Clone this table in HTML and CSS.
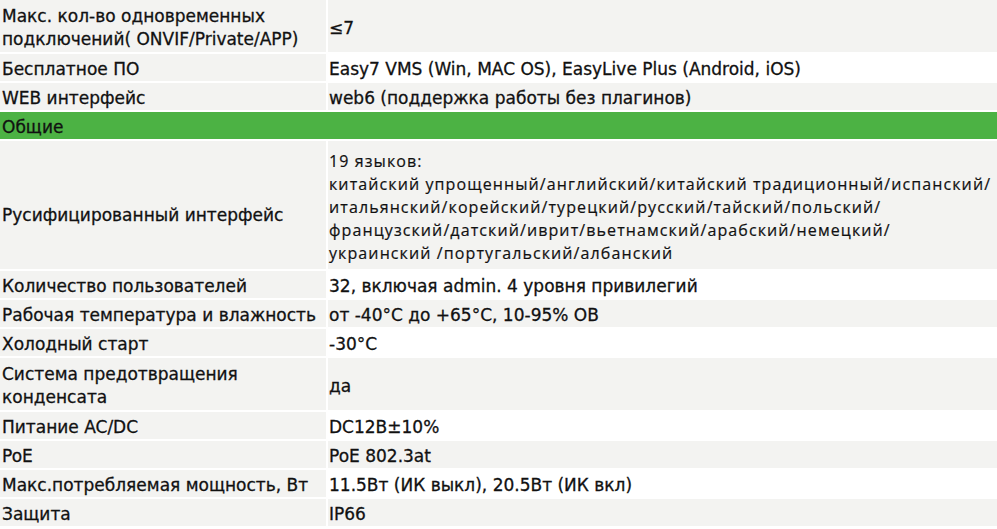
FILE: index.html
```html
<!DOCTYPE html>
<html lang="ru">
<head>
<meta charset="utf-8">
<title>Характеристики</title>
<link rel="stylesheet" href="styles.css">
</head>
<body>
<div class="specs">
  <div class="cell label tall">Макс. кол-во одновременных подключений( ONVIF/Private/APP)</div>
  <div class="cell value tall shade">≤7</div>

  <div class="cell label">Бесплатное ПО</div>
  <div class="cell value">Easy7 VMS (Win, MAC OS), EasyLive Plus (Android, iOS)</div>

  <div class="cell label">WEB интерфейс</div>
  <div class="cell value shade">web6 (поддержка работы без плагинов)</div>

  <div class="cell section">Общие</div>

  <div class="cell label lang-label">Русифицированный интерфейс</div>
  <div class="cell value shade langs">19 языков:<br>китайский упрощенный/английский/китайский традиционный/испанский/<br>итальянский/корейский/турецкий/русский/тайский/польский/<br>французский/датский/иврит/вьетнамский/арабский/немецкий/<br>украинский /португальский/албанский</div>

  <div class="cell label">Количество пользователей</div>
  <div class="cell value">32, включая admin. 4 уровня привилегий</div>

  <div class="cell label">Рабочая температура и влажность</div>
  <div class="cell value shade">от -40°C до +65°C, 10-95% ОВ</div>

  <div class="cell label">Холодный старт</div>
  <div class="cell value">-30°C</div>

  <div class="cell label tall">Система предотвращения конденсата</div>
  <div class="cell value tall shade">да</div>

  <div class="cell label">Питание AC/DC</div>
  <div class="cell value">DC12B±10%</div>

  <div class="cell label">PoE</div>
  <div class="cell value shade">PoE 802.3at</div>

  <div class="cell label">Макс.потребляемая мощность, Вт</div>
  <div class="cell value">11.5Вт (ИК выкл), 20.5Вт (ИК вкл)</div>

  <div class="cell label">Защита</div>
  <div class="cell value shade">IP66</div>
</div>
</body>
</html>
```
FILE: styles.css
```css
html, body {
  margin: 0;
  padding: 0;
  background: #ffffff;
}

.specs {
  display: grid;
  grid-template-columns: 326px 1fr;
  column-gap: 2px;
  row-gap: 2px;
  width: 997px;
  font-family: "DejaVu Sans", Verdana, sans-serif;
  font-size: 17px;
  line-height: 23px;
  color: #111111;
  -webkit-text-stroke: 0.3px #111111;
}

.cell {
  display: flex;
  align-items: center;
  padding: 4px 1px 0 1px;
  min-height: 23px;
}

.label {
  background: #f3f3f1;
  padding-left: 2px;
}

.shade {
  background: #f3f3f1;
}

.tall {
  padding-top: 5px;
  padding-bottom: 1px;
}

.section {
  grid-column: 1 / span 2;
  background: #4cb244;
  padding-left: 2px;
}

.langs {
  display: block;
  padding-top: 9px;
  padding-bottom: 4px;
  font-family: "Open Sans", "Noto Sans", sans-serif;
  font-size: 16px;
  letter-spacing: 1.1px;
  white-space: nowrap;
  -webkit-text-stroke: 0.2px #111111;
}

.lang-label {
  padding-top: 20px;
}
```
